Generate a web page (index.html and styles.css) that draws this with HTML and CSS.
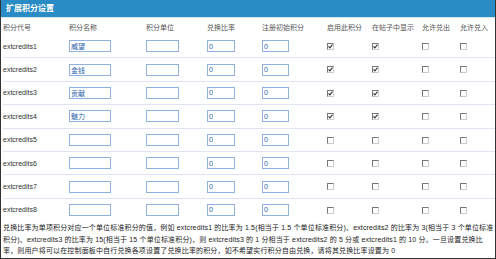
FILE: index.html
```html
<!DOCTYPE html>
<html lang="zh-CN">
<head>
  <meta charset="UTF-8" />
  <title>扩展积分设置</title>
  <link rel="stylesheet" href="styles.css">
</head>
<body>
  <div class="panel">
    <div class="title">扩展积分设置</div>
    <table class="grid">
      <colgroup>
        <col class="c1"><col class="c2"><col class="c3"><col class="c4"><col class="c5">
        <col class="c6"><col class="c7"><col class="c8"><col class="c9">
      </colgroup>
      <thead>
        <tr>
          <th>积分代号</th><th>积分名称</th><th>积分单位</th><th>兑换比率</th><th>注册初始积分</th>
          <th>启用此积分</th><th>在帖子中显示</th><th>允许兑出</th><th>允许兑入</th>
        </tr>
      </thead>
      <tbody id="rows"></tbody>
    </table>
    <p class="note">兑换比率为单项积分对应一个单位标准积分的值，例如 extcredits1 的比率为 1.5(相当于 1.5 个单位标准积分)、extcredits2 的比率为 3(相当于 3 个单位标准<br>积分)、extcredits3 的比率为 15(相当于 15 个单位标准积分)，则 extcredits3 的 1 分相当于 extcredits2 的 5 分或 extcredits1 的 10 分。一旦设置兑换比<br>率，则用户将可以在控制面板中自行兑换各项设置了兑换比率的积分，如不希望实行积分自由兑换，请将其兑换比率设置为 0</p>
  </div>

  <script>
    const names = ["威望", "金钱", "贡献", "魅力", "", "", "", ""];
    const rows = document.getElementById("rows");

    function box(on) {
      const mark = on
        ? '<svg viewBox="0 0 7 7" width="7" height="7"><polyline points="1.5,3.3 2.9,4.8 5.5,1.7" fill="none" stroke="#333" stroke-width="1.1"/></svg>'
        : "";
      return '<span class="cb">' + mark + "</span>";
    }

    names.forEach((n, i) => {
      const on = n !== "";
      const tr = document.createElement("tr");
      tr.innerHTML =
        "<td>extcredits" + (i + 1) + "</td>" +
        '<td><input class="txt w-name" value="' + n + '"></td>' +
        '<td><input class="txt w-unit" value=""></td>' +
        '<td><input class="txt w-ratio" value="0"></td>' +
        '<td><input class="txt w-init" value="0"></td>' +
        "<td>" + box(on) + "</td>" +
        "<td>" + box(on) + "</td>" +
        "<td>" + box(false) + "</td>" +
        "<td>" + box(false) + "</td>";
      rows.appendChild(tr);
    });
  </script>
</body>
</html>
```

FILE: styles.css
```css
body {
  margin: 0;
  font-family: "Liberation Sans", "Noto Sans CJK SC", sans-serif;
  font-size: 7px;
  color: #333;
  background: #fff;
}
.panel {
  width: 494px;
  height: 258px;
  border-left: 1px solid #333;
  border-right: 1px solid #333;
  border-bottom: 1px solid #333;
  overflow: hidden;
}
.title {
  height: 17px;
  line-height: 17px;
  padding-left: 5px;
  background: #2a8cc4;
  color: #fff;
  font-weight: bold;
  font-size: 8px;
  border-bottom: 1px solid #d8e6f2;
}
.grid {
  width: 492px;
  margin-left: 2px;
  border-collapse: collapse;
  table-layout: fixed;
}
.c1 { width: 66px; }
.c2 { width: 77px; }
.c3 { width: 61px; }
.c4 { width: 55px; }
.c5 { width: 65px; }
.c6 { width: 45px; }
.c7 { width: 50px; }
.c8 { width: 38px; }
.c9 { width: 35px; }
.grid th {
  height: 17px;
  padding: 0;
  text-align: left;
  font-weight: normal;
  color: #555;
}
.grid td {
  height: 22.4px;
  padding: 0;
  border-top: 1px solid #e2e2f4;
  white-space: nowrap;
}
.grid tbody tr:first-child td {
  border-top: none;
}
.txt {
  box-sizing: border-box;
  height: 12px;
  margin: 0;
  padding: 0 1px;
  border: 1px solid #8fb2dc;
  font-family: "Liberation Sans", "Noto Sans CJK SC", sans-serif;
  font-size: 7px;
  color: #2a62a8;
  background: #fff;
  vertical-align: middle;
}
.w-name { width: 42px; }
.w-unit { width: 33px; }
.w-ratio { width: 28px; }
.w-init { width: 27px; }
.cb {
  display: inline-block;
  box-sizing: border-box;
  width: 7px;
  height: 7px;
  border-top: 1px solid #777;
  border-left: 1px solid #777;
  border-right: 1px solid #ccc;
  border-bottom: 1px solid #ccc;
  background: #fff;
  vertical-align: middle;
  position: relative;
}
.cb svg {
  position: absolute;
  left: -1px;
  top: -1px;
}
.note {
  margin: 1px 2px 0 2px;
  line-height: 11.5px;
  color: #222;
  white-space: nowrap;
  letter-spacing: 0.15px;
}
```
